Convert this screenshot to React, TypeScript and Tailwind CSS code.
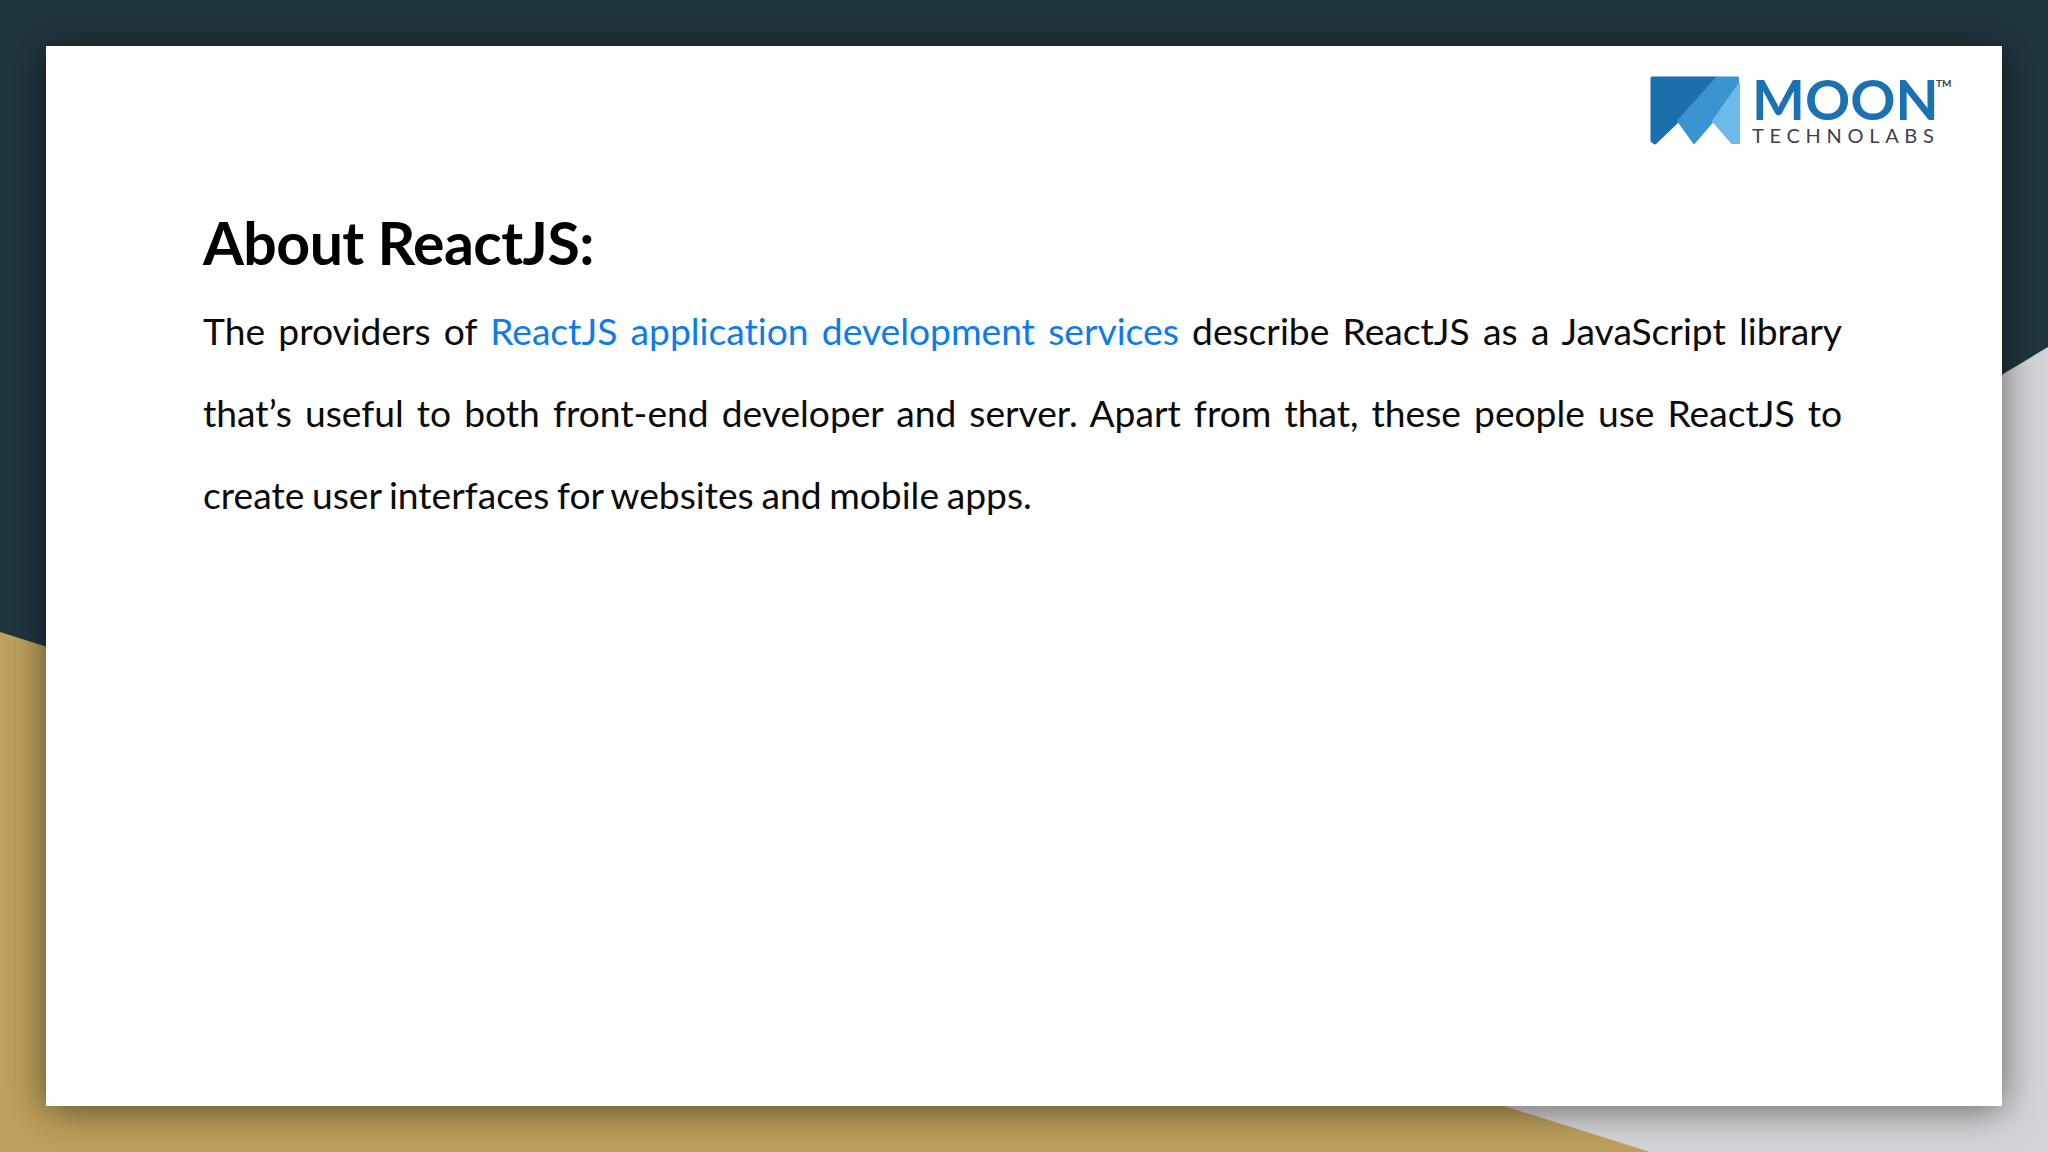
export default function App() {
  return (
    <div className="relative h-[1152px] w-[2048px] overflow-hidden bg-[#21353f] font-['Lato',sans-serif]">
      {/* Background shapes */}
      <div className="absolute inset-0 bg-[#d5d4d8] [clip-path:polygon(100%_347px,100%_100%,1400px_100%,1400px_736px)]" />
      <div className="absolute inset-0 bg-[#bda15c] [clip-path:polygon(0_632px,1650px_1152px,0_1152px)]" />

      {/* Slide */}
      <div className="relative ml-[46px] mt-[46px] flex h-[1060px] w-[1956px] flex-col bg-white pl-[157px] pr-[160px] shadow-[0_3px_36px_rgba(0,0,0,0.55)]">
        {/* Logo */}
        <div className="-mr-[89px] mt-[30px] flex h-[68px] items-start justify-end gap-[8px]">
          <svg width="91" height="69" viewBox="0 0 91 69" className="shrink-0">
            <path d="M2 2H67L28 45L5 67L2 65Z" fill="#1a70ad" stroke="#1a70ad" strokeWidth="3" strokeLinejoin="round" />
            <path d="M67 1.5H88V8L63 45L44 67L28 45Z" fill="#3a94d0" stroke="#3a94d0" strokeWidth="2" strokeLinejoin="round" />
            <path d="M89 8V67H82L63 45Z" fill="#6db9e8" stroke="#6db9e8" strokeWidth="2" strokeLinejoin="round" />
          </svg>
          <div className="relative flex w-[182px] flex-col pl-[3px]">
            <span className="text-[56px] font-bold leading-[46px] text-[#1a72b2]">MOON</span>
            <span className="mt-[5px] text-[20px] leading-[16px] tracking-[5.7px] text-[#3c4350] whitespace-nowrap">TECHNOLABS</span>
            <span className="absolute left-[187px] top-[1px] text-[10px] font-bold leading-[12px] text-[#3c4350]">TM</span>
          </div>
        </div>

        <h1 className="mt-[63px] text-[59px] font-bold leading-[72px] tracking-[-0.55px] text-black">About ReactJS:</h1>

        <p className="mt-[11px] text-justify text-[37.2px] leading-[82px] text-[#0a0a0a] [font-variant-ligatures:none]">
          The providers of <a className="text-[#0d7bea]">ReactJS application development services</a> describe ReactJS as a JavaScript library that’s useful to both front-end developer and server. Apart from that, these people use ReactJS to <span className="[word-spacing:-1.8px]">create user interfaces for websites and mobile apps.</span>
        </p>
      </div>
    </div>
  );
}
